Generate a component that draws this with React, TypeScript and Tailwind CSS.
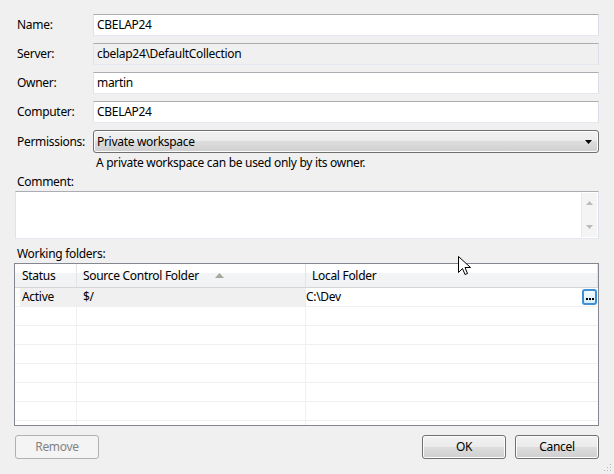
import React from "react";

const font = { fontFamily: '"Noto Sans", "Liberation Sans", sans-serif', letterSpacing: "-0.3px" };

function Field({ label, value, disabled }: { label: string; value: string; disabled?: boolean }) {
  return (
    <div className="flex items-center h-[22px]">
      <div className="w-[93px] pl-[17px] text-[12px] text-black leading-none">{label}</div>
      <div
        className={
          "w-[506px] h-[22px] flex items-center pl-[3px] text-[12px] text-black border border-t-[#abadb3] border-l-[#e2e3ea] border-r-[#dbdfe6] border-b-[#e3e9ef] " +
          (disabled ? "bg-[#f0f0f0]" : "bg-white")
        }
      >
        {value}
      </div>
    </div>
  );
}

function Win7Button({ children, disabled, className }: { children?: React.ReactNode; disabled?: boolean; className?: string }) {
  if (disabled) {
    return (
      <div className={"h-[24px] w-[84px] rounded-[3px] border border-[#adb2b5] bg-[#f4f4f4] flex items-center justify-center text-[12px] text-[#838383] " + (className || "")}>
        {children}
      </div>
    );
  }
  return (
    <div className={"h-[24px] w-[84px] rounded-[3px] border border-[#707070] bg-[linear-gradient(#f2f2f2_0%,#ebebeb_50%,#dddddd_50%,#cfcfcf_100%)] shadow-[inset_0_0_0_1px_#fcfcfc] flex items-center justify-center text-[12px] text-black " + (className || "")}>
      {children}
    </div>
  );
}

const rows = 7;

export default function App() {
  return (
    <div className="relative w-[614px] h-[474px] bg-[#f0f0f0] overflow-hidden select-none" style={font}>
      <div className="flex flex-col pt-[14px]">
        <div className="flex flex-col gap-[7px]">
          <Field label="Name:" value="CBELAP24" />
          <Field label="Server:" value="cbelap24\DefaultCollection" disabled />
          <Field label="Owner:" value="martin" />
          <Field label="Computer:" value="CBELAP24" />
          <div className="flex items-center h-[23px]">
            <div className="w-[93px] pl-[17px] text-[12px] text-black leading-none">Permissions:</div>
            <div className="w-[506px] h-[23px] rounded-[3px] border border-[#707070] bg-[linear-gradient(#f2f2f2_0%,#ebebeb_50%,#dddddd_50%,#cfcfcf_100%)] shadow-[inset_0_0_0_1px_#fcfcfc] flex items-center pl-[3px] pr-[6px] text-[12px] text-black">
              <span className="flex-1">Private workspace</span>
              <svg width="7" height="4" viewBox="0 0 7 4"><path d="M0 0h7L3.5 4z" fill="#000" /></svg>
            </div>
          </div>
        </div>
        <div className="pl-[96px] mt-[1px] h-[18px] flex items-center text-[12px] text-black">
          A private workspace can be used only by its owner.
        </div>
        <div className="pl-[17px] h-[19px] flex items-center text-[12px] text-black">Comment:</div>
        <div className="ml-[15px] w-[584px] h-[48px] bg-white border border-t-[#abadb3] border-l-[#e2e3ea] border-r-[#dbdfe6] border-b-[#e3e9ef] flex justify-end p-[1px]">
          <div className="w-[16px] h-full bg-[#f4f4f4] border-l border-[#e8e8e8] flex flex-col items-center justify-between py-[8px]">
            <svg width="7" height="4" viewBox="0 0 7 4"><path d="M3.5 0L7 4H0z" fill="#bcbcbc" /></svg>
            <svg width="7" height="4" viewBox="0 0 7 4"><path d="M0 0h7L3.5 4z" fill="#bcbcbc" /></svg>
          </div>
        </div>
        <div className="pl-[17px] h-[18px] mt-[6px] flex items-center text-[12px] text-black">Working folders:</div>
        <div className="ml-[14px] w-[585px] h-[163px] border border-[#828790] bg-white flex flex-col overflow-hidden">
          <div className="flex h-[24px] shrink-0 border-b border-[#d5d5d5] bg-[linear-gradient(#ffffff_0%,#ffffff_40%,#f3f4f6_41%,#f1f2f4_100%)] text-[12px] text-black">
            <div className="w-[62px] flex items-center pl-[7px] border-r border-[#e4e5e7]">Status</div>
            <div className="w-[229px] flex items-center pl-[6px] border-r border-[#e4e5e7]">
              <span>Source Control Folder</span>
              <svg className="ml-[16px]" width="9" height="5" viewBox="0 0 9 5"><path d="M4.5 0L9 5H0z" fill="#a7a79b" /></svg>
            </div>
            <div className="w-[292px] flex items-center pl-[6px] border-r border-[#e4e5e7]">Local Folder</div>
          </div>
          <div className="flex h-[19px] shrink-0 border-b border-[#f0f0f0] text-[12px] text-black">
            <div className="w-[62px] pl-[5px] flex border-r border-[#f0f0f0]">
              <div className="flex-1 bg-[#f0f0f0] flex items-center pl-[2px]">Active</div>
            </div>
            <div className="w-[229px] bg-[#f0f0f0] border-r border-[#e8e8e8] flex items-center pl-[6px]">$/</div>
            <div className="w-[292px] flex items-center pr-[1px] justify-between">
              <span>C:\Dev</span>
              <div className="w-[15px] h-[16px] rounded-[3px] border-2 border-[#3d8fd6] bg-[linear-gradient(#f4fbff,#d8effc)] flex items-end justify-center pb-[3px] gap-[1px]">
                <span className="w-[2px] h-[2px] bg-black" />
                <span className="w-[2px] h-[2px] bg-black" />
                <span className="w-[2px] h-[2px] bg-black" />
              </div>
            </div>
          </div>
          {Array.from({ length: rows }).map((_, i) => (
            <div key={i} className="flex h-[19px] shrink-0 border-b border-[#f0f0f0]">
              <div className="w-[62px] border-r border-[#f0f0f0]" />
              <div className="w-[229px] border-r border-[#f0f0f0]" />
              <div className="w-[292px]" />
            </div>
          ))}
        </div>
        <div className="flex mt-[9px] px-[15px]">
          <Win7Button disabled>Remove</Win7Button>
          <div className="flex-1" />
          <Win7Button className="mr-[9px]">OK</Win7Button>
          <Win7Button>Cancel</Win7Button>
        </div>
      </div>
      {/* size grip */}
      <svg className="absolute right-[2px] bottom-[2px]" width="10" height="10" viewBox="0 0 10 10">
        {[[8, 2], [8, 5], [5, 5], [8, 8], [5, 8], [2, 8]].map(([x, y], i) => (
          <rect key={i} x={x} y={y} width="1" height="1" fill="#b8b8b8" />
        ))}
      </svg>
      {/* mouse cursor */}
      <svg className="absolute left-[458px] top-[256px]" width="13" height="20" viewBox="0 0 13 20">
        <path d="M0.5 0.5 L0.5 16.5 L4.5 12.5 L7 18.5 L9.5 17.5 L7 11.5 L12.5 11.5 Z" fill="#fff" stroke="#000" strokeWidth="1" strokeLinejoin="miter" />
      </svg>
    </div>
  );
}
